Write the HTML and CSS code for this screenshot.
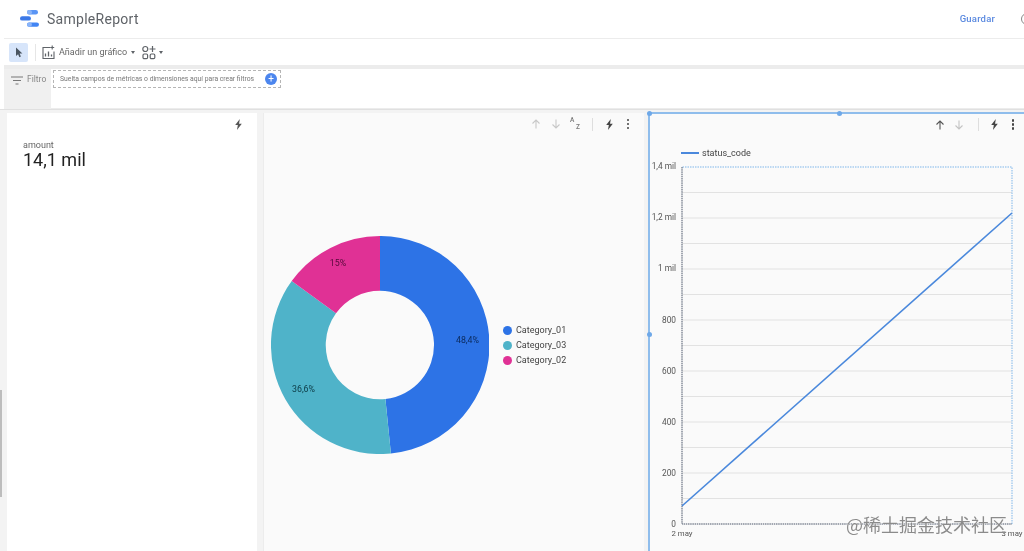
FILE: index.html
```html
<!DOCTYPE html>
<html lang="es">
<head>
<meta charset="utf-8">
<title>SampleReport</title>
<link rel="stylesheet" href="styles.css">
</head>
<body>
<div class="page">
  <header class="topbar">
    <svg class="logo" width="19" height="17" viewBox="0 0 19 17">
      <rect x="7" y="0" width="11" height="4.400" rx="2.200" fill="#5a95f5"/>
      <rect x="7" y="0" width="5" height="4.400" rx="2.200" fill="#8ab4f8"/>
      <rect x="0" y="6.200" width="11" height="4.400" rx="2.200" fill="#3b78e7"/>
      <rect x="7" y="12.400" width="12" height="4.400" rx="2.200" fill="#4285f4"/>
      <rect x="7" y="12.400" width="5" height="4.400" rx="2.200" fill="#8ab4f8"/>
    </svg>
    <span class="title">SampleReport</span>
    <span class="save">Guardar</span>
    <span class="ring"></span>
  </header>

  <nav class="toolbar">
    <button class="select-btn" aria-label="Seleccionar">
      <svg width="10" height="11" viewBox="0 0 10 11"><path d="M2 0.500v8.600l2.100-1.900 1.300 3 1.500-.7-1.300-2.900 2.800-.2z" fill="#4a5560"/></svg>
    </button>
    <span class="tool-sep"></span>
    <svg class="add-icon" width="13" height="15" viewBox="0 0 13 15" fill="none" stroke="#5f6368" stroke-width="1.100">
      <path d="M8 2.500H1v11h11V6.500"/>
      <path d="M10.200 0.500v4M8.200 2.500h4"/>
      <path d="M3.500 11.500v-3M6.500 11.500v-5M9.500 11.500v-2" stroke-width="1.300"/>
    </svg>
    <span class="tool-label">Añadir un gráfico</span>
    <span class="caret"></span>
    <svg class="ctl-icon" width="14" height="15" viewBox="0 0 14 15" fill="none" stroke="#5f6368" stroke-width="1.200">
      <circle cx="3.300" cy="4" r="2.500"/>
      <path d="M10.500 1v6M7.500 4h6"/>
      <rect x="1" y="9" width="4.600" height="4.600" rx="1.200"/>
      <rect x="8.200" y="9" width="4.600" height="4.600" rx="1.200"/>
    </svg>
    <span class="caret"></span>
  </nav>

  <section class="filterbar">
    <div class="filter-label">
      <svg width="12" height="9" viewBox="0 0 12 9" fill="none" stroke="#777" stroke-width="1"><path d="M0 1h12M2 4.500h8M4.500 8h3"/></svg>
      <span>Filtro</span>
    </div>
    <div class="filter-box">
      <div class="drop-zone">
        <span class="drop-text">Suelta campos de métricas o dimensiones aquí para crear filtros</span>
        <span class="plus">+</span>
      </div>
    </div>
  </section>

  <main class="canvas">
    <article class="card card-score">
      <div class="card-tools tools-score">
        <svg class="bolt" width="9" height="11" viewBox="0 0 8 10"><path d="M5.200 0 1 5.400h2.400L2.600 10 7 4.400H4.500z" fill="#555"/></svg>
      </div>
      <div class="score">
        <div class="score-name">amount</div>
        <div class="score-value">14,1 mil</div>
      </div>
    </article>

    <article class="card card-pie">
      <div class="card-tools tools-pie">
        <svg width="10" height="10" viewBox="0 0 10 10" fill="none" stroke="#c8c8c8" stroke-width="1.100"><path d="M5 9.500V1M1.500 4.500 5 1l3.500 3.500"/></svg>
        <svg width="10" height="10" viewBox="0 0 10 10" fill="none" stroke="#c8c8c8" stroke-width="1.100"><path d="M5 .5V9M1.500 5.500 5 9l3.500-3.500"/></svg>
        <span class="az"><span class="az-a">A</span><span class="az-z">Z</span></span>
        <span class="card-sep"></span>
        <svg class="bolt" width="9" height="11" viewBox="0 0 8 10"><path d="M5.200 0 1 5.400h2.400L2.600 10 7 4.400H4.500z" fill="#444"/></svg>
        <span class="dots"><i></i><i></i><i></i></span>
      </div>
      <div class="pie-row">
        <svg class="donut" width="218" height="218" viewBox="-109 -109 218 218">
          <path d="M0-109A109 109 0 0 1 10.900 108.500L5.400 54A54.300 54.300 0 0 0 0-54.300Z" fill="#2d73e6"/>
          <path d="M10.900 108.500A109 109 0 0 1-88.300-63.900L-44-31.800A54.300 54.300 0 0 0 5.400 54Z" fill="#4fb3c9"/>
          <path d="M-88.300-63.900A109 109 0 0 1 0-109V-54.300A54.300 54.300 0 0 0-44-31.800Z" fill="#e03195"/>
          <text class="slice" x="87.500" y="-4" fill="#0b2a5c">48,4%</text>
          <text class="slice" x="-76.500" y="44.500" fill="#0c3a45">36,6%</text>
          <text class="slice" x="-42" y="-81.500" fill="#55093a">15%</text>
        </svg>
        <ul class="legend">
          <li><i class="dot d1"></i>Category_01</li>
          <li><i class="dot d2"></i>Category_03</li>
          <li><i class="dot d3"></i>Category_02</li>
        </ul>
      </div>
    </article>

    <article class="card card-line">
      <span class="handle h-tl"></span>
      <span class="handle h-tc"></span>
      <span class="handle h-ml"></span>
      <div class="card-tools tools-line">
        <svg width="10" height="10" viewBox="0 0 10 10" fill="none" stroke="#555" stroke-width="1.100"><path d="M5 9.500V1M1.500 4.500 5 1l3.500 3.500"/></svg>
        <svg width="10" height="10" viewBox="0 0 10 10" fill="none" stroke="#c4c4c4" stroke-width="1.100"><path d="M5 .5V9M1.500 5.500 5 9l3.500-3.500"/></svg>
        <span class="card-sep"></span>
        <svg class="bolt" width="9" height="11" viewBox="0 0 8 10"><path d="M5.200 0 1 5.400h2.400L2.600 10 7 4.400H4.500z" fill="#444"/></svg>
        <span class="dots"><i></i><i></i><i></i></span>
      </div>
      <div class="line-legend"><i class="swatch"></i>status_code</div>
      <svg class="line-chart" width="375" height="391" viewBox="0 0 375 391">
        <g stroke="#e2e2e2" stroke-width="1">
          <path d="M33 32.500H363M33 58H363M33 83.500H363M33 109H363M33 134.500H363M33 160H363M33 185.500H363M33 211H363M33 236.500H363M33 262H363M33 287.500H363M33 313H363M33 338.500H363"/>
        </g>
        <path d="M33.500 7H363V364" fill="none" stroke="#7fb6ea" stroke-width="1" stroke-dasharray="1.500 1"/>
        <path d="M33 7V364H363" fill="none" stroke="#4a5568" stroke-width="1" stroke-dasharray="1.500 .7"/>
        <path d="M33 346 363 53" fill="none" stroke="#4a88dc" stroke-width="1.600"/>
        <g class="axis-y">
          <text x="27" y="9">1,4 mil</text>
          <text x="27" y="60">1,2 mil</text>
          <text x="27" y="111">1 mil</text>
          <text x="27" y="163">800</text>
          <text x="27" y="214">600</text>
          <text x="27" y="265">400</text>
          <text x="27" y="316">200</text>
          <text x="27" y="367">0</text>
        </g>
        <g class="axis-x">
          <text x="33" y="376">2 may</text>
          <text x="363" y="376">3 may</text>
        </g>
      </svg>
    </article>
  </main>
  <span class="scroll-thumb"></span>
  <span class="watermark">@稀土掘金技术社区</span>
</div>
</body>
</html>
```

FILE: styles.css
```css
* { box-sizing: border-box; }
html, body { margin: 0; height: 100%; overflow: hidden; background: #fff; }
body { font-family: Roboto, "Noto Sans CJK SC", sans-serif; color: #333; }

.page {
  position: relative;
  width: 1024px;
  height: 551px;
  display: flex;
  flex-direction: column;
  overflow: hidden;
  filter: blur(.45px);
}

/* top bar */
.topbar {
  height: 39px;
  margin-left: 4px;
  flex: none;
  display: flex;
  align-items: center;
  padding: 0 0 1px 16px;
  border-bottom: 1px solid #ececec;
}
.logo { flex: none; }
.title { margin-left: 8px; font-size: 14px; color: #5f6368; letter-spacing: .02em; }
.save { margin-left: auto; font-size: 9.500px; font-weight: 500; color: #5b8ae0; letter-spacing: .02em; }
.ring {
  flex: none;
  width: 12px;
  height: 12px;
  margin: 0 -9px 0 26px;
  border: 1.200px solid #888;
  border-radius: 50%;
}

/* toolbar */
.toolbar {
  height: 26px;
  flex: none;
  margin-left: 4px;
  display: flex;
  align-items: center;
  padding-left: 5px;
  color: #5f6368;
}
.select-btn {
  width: 19px;
  height: 19px;
  padding: 0;
  border: 0;
  border-radius: 2px;
  background: #d7e5fa;
  display: flex;
  align-items: center;
  justify-content: center;
}
.tool-sep { width: 1px; height: 17px; margin: 0 6px 0 7px; background: #e6e6e6; }
.add-icon { flex: none; }
.tool-label { margin-left: 4px; font-size: 9px; color: #666; }
.caret {
  width: 0;
  height: 0;
  margin-left: 4px;
  border: 2.500px solid transparent;
  border-top: 3px solid #5f6368;
  border-bottom: 0;
}
.ctl-icon { margin-left: 7px; flex: none; }
.ctl-icon + .caret { margin-left: 3px; }

/* filter bar */
.filterbar {
  height: 44px;
  flex: none;
  margin-left: 4px;
  display: flex;
  background: #ececec;
  padding-top: 4px;
}
.filter-label {
  width: 47px;
  flex: none;
  display: flex;
  align-items: flex-start;
  gap: 4px;
  padding: 5px 0 0 7px;
  font-size: 8.500px;
  color: #888;
  line-height: 10px;
  background: #f0f0f0;
}
.filter-label svg { margin-top: 2px; flex: none; }
.filter-box { flex: 1; background: #fff; padding: 1px 0 0 2px; height: 39px; }
.drop-zone {
  width: 228px;
  height: 18px;
  display: flex;
  align-items: center;
  padding: 0 3px 0 6px;
  border: 1px dashed #b5b5b5;
  font-size: 6.800px;
  color: #777;
}
.drop-text { white-space: nowrap; }
.plus {
  width: 12px;
  height: 12px;
  margin-left: auto;
  border-radius: 50%;
  background: #4c86ee;
  color: #fff;
  font-size: 10px;
  line-height: 12px;
  text-align: center;
  flex: none;
}

/* canvas */
.canvas {
  flex: 1;
  display: grid;
  grid-template-columns: 250px 380px 376px;
  column-gap: 6px;
  padding: 3px 0 0 7px;
  background: #f3f3f3;
  border-top: 1px solid #e0e0e0;
  min-height: 0;
}
.card { position: relative; min-width: 0; }
.card-score { background: #fff; }
.card-pie { background: #fafafa; border-left: 1px solid #ececec; margin-right: -1px; }
.card-line {
  background: #fafafa;
  border-left: 2px solid #8fbdec;
  border-top: 2px solid #8fbdec;
  margin-left: -1px;
  margin-top: -1px;
}

.card-tools {
  height: 22px;
  display: flex;
  align-items: center;
  justify-content: flex-end;
}
.tools-score { padding-right: 14px; }
.tools-pie { gap: 9.500px; padding-right: 15px; }
.tools-pie .card-sep { margin: 0 3px 0 2px; }
.tools-line { gap: 9.500px; padding-right: 11px; height: 21px; }
.tools-line .card-sep { margin: 0 2px 0 4px; }
.bolt { flex: none; }
.card-sep { width: 1px; height: 13px; background: #dedede; }
.dots { display: flex; flex-direction: column; gap: 1.500px; margin-left: 3px; }
.dots i { width: 2.500px; height: 2.500px; border-radius: 50%; background: #444; }
.az {
  display: flex;
  flex-direction: column;
  width: 10px;
  font-size: 6.500px;
  line-height: 7px;
  font-weight: 500;
  color: #777;
}
.az-z { align-self: flex-end; }

/* score card */
.score { padding: 5px 0 0 16px; }
.score-name { font-size: 9px; line-height: 11px; color: #666; }
.score-value { font-size: 18px; line-height: 18px; color: #222; }

/* donut */
.pie-row {
  display: flex;
  align-items: center;
  padding: 101px 0 0 6.500px;
}
.donut { flex: none; }
.slice { font-size: 8.800px; text-anchor: middle; dominant-baseline: middle; }
.legend {
  list-style: none;
  margin: 0 0 0 14.500px;
  padding: 0;
  font-size: 9px;
  color: #444;
}
.legend li { display: flex; align-items: center; height: 15px; }
.dot { width: 9px; height: 9px; border-radius: 50%; margin-right: 4px; flex: none; }
.d1 { background: #2d73e6; }
.d2 { background: #4fb3c9; }
.d3 { background: #e03195; }

/* line chart */
.line-legend {
  display: flex;
  align-items: center;
  padding: 11px 0 0 31px;
  height: 25px;
  font-size: 9px;
  color: #444;
}
.swatch { width: 18px; height: 1.500px; margin-right: 3px; background: #4a88dc; }
.line-chart { display: block; margin-left: -1px; }
.axis-y text { font-size: 8.300px; text-anchor: end; fill: #555; }
.axis-x text { font-size: 7.800px; text-anchor: middle; fill: #555; }

/* overlays */
.handle {
  position: absolute;
  width: 5px;
  height: 5px;
  border-radius: 50%;
  background: #6ea8e8;
}
.h-tl { left: -3.500px; top: -3.500px; }
.h-tc { left: 187px; top: -3.500px; }
.h-ml { left: -3.500px; top: 218px; }

.scroll-thumb {
  position: absolute;
  left: 0;
  top: 390px;
  width: 2px;
  height: 107px;
  background: #bdbdbd;
}
.watermark {
  position: absolute;
  left: 846px;
  top: 515px;
  font-family: "Noto Sans CJK SC", sans-serif;
  font-size: 18px;
  line-height: 18px;
  color: rgba(110, 110, 110, .8);
  text-shadow: 0 0 1px #fff, 0 0 1px #fff;
  white-space: nowrap;
}
```
